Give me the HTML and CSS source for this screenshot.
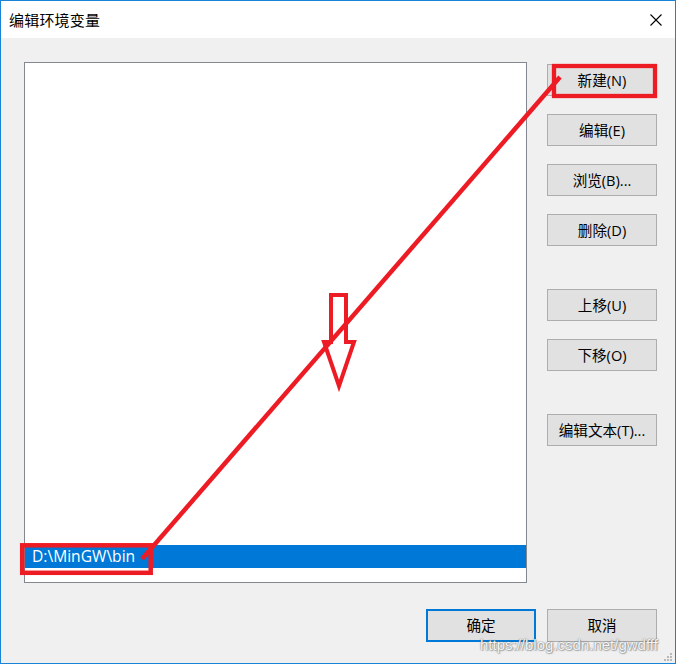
FILE: index.html
```html
<!DOCTYPE html>
<html lang="zh-CN">
<head>
<meta charset="utf-8">
<title>编辑环境变量</title>
<link rel="stylesheet" href="styles.css">
</head>
<body>
<div class="window">
  <div class="titlebar">
    <span class="title">编辑环境变量</span>
    <svg class="close" width="12" height="12" viewBox="0 0 12 12"><path d="M0.5 0.5 L11.5 11.5 M11.5 0.5 L0.5 11.5" stroke="#000" stroke-width="1.1" fill="none"/></svg>
  </div>
  <div class="content">
    <div class="main">
      <div class="listbox">
        <div class="item selected">D:\MinGW\bin</div>
      </div>
      <div class="side">
        <div class="group">
          <div class="btn">新建(N)</div>
          <div class="btn">编辑(E)</div>
          <div class="btn">浏览(B)...</div>
          <div class="btn">删除(D)</div>
        </div>
        <div class="group">
          <div class="btn">上移(U)</div>
          <div class="btn">下移(O)</div>
        </div>
        <div class="group">
          <div class="btn">编辑文本(T)...</div>
        </div>
      </div>
    </div>
    <div class="footer">
      <div class="btn wide default">确定</div>
      <div class="btn wide">取消</div>
    </div>
  </div>
  <svg class="annot" width="677" height="664" viewBox="0 0 677 664">
    <g fill="none" stroke="#ed1c24">
      <rect x="554" y="66" width="101" height="30" stroke-width="4.3"/>
      <rect x="22.2" y="545.3" width="128.5" height="27.5" stroke-width="4.5"/>
      <line x1="560" y1="77" x2="142" y2="559" stroke-width="4.5"/>
      <polygon points="331,295 346,295 346,342 354,342 339,386 324,342 331,342" stroke-width="4" stroke-linejoin="miter"/>
    </g>
  </svg>
  <div class="watermark">https://blog.csdn.net/gwdfff</div>
  <svg class="grip" width="10" height="10" viewBox="0 0 10 10">
    <g fill="#b9b9b9">
      <rect x="7" y="1" width="2" height="2"/>
      <rect x="4" y="4" width="2" height="2"/>
      <rect x="7" y="4" width="2" height="2"/>
      <rect x="1" y="7" width="2" height="2"/>
      <rect x="4" y="7" width="2" height="2"/>
      <rect x="7" y="7" width="2" height="2"/>
    </g>
  </svg>
</div>
</body>
</html>
```

FILE: styles.css
```css
html, body {
  margin: 0;
  padding: 0;
  background: #ffffff;
}

body {
  width: 677px;
  height: 664px;
  overflow: hidden;
  font-family: "Open Sans", "Noto Sans CJK SC", sans-serif;
  color: #000;
}

.window {
  position: relative;
  box-sizing: border-box;
  width: 676px;
  height: 664px;
  border: 1px solid #1883d7;
  background: #f0f0f0;
  display: flex;
  flex-direction: column;
}

.titlebar {
  height: 37px;
  background: #ffffff;
  display: flex;
  align-items: center;
  justify-content: space-between;
  padding-left: 8px;
  padding-right: 13px;
}

.title {
  font-family: "Noto Sans CJK SC", sans-serif;
  font-size: 15px;
  line-height: 37px;
  letter-spacing: 0.2px;
}

.close {
  display: block;
}

.content {
  padding: 24px 18px 0 23px;
  display: flex;
  flex-direction: column;
}

.main {
  display: flex;
  gap: 20px;
}

.listbox {
  box-sizing: border-box;
  width: 503px;
  height: 521px;
  border: 1px solid #828790;
  background: #ffffff;
  display: flex;
  flex-direction: column;
  justify-content: flex-end;
  padding-bottom: 14px;
}

.item {
  height: 23px;
  line-height: 23px;
  padding-left: 7px;
  font-size: 15.6px;
}

.item.selected {
  background: #0078d7;
  color: #ffffff;
}

.side {
  width: 110px;
  padding-top: 2px;
  display: flex;
  flex-direction: column;
  gap: 43px;
}

.group {
  display: flex;
  flex-direction: column;
  gap: 18px;
}

.btn {
  box-sizing: border-box;
  width: 110px;
  height: 32px;
  border: 1px solid #adadad;
  background: #e1e1e1;
  display: flex;
  align-items: center;
  justify-content: center;
  font-size: 14.6px;
  padding-bottom: 2px;
}

.footer {
  margin-top: 26px;
  display: flex;
  justify-content: flex-end;
  gap: 11px;
}

.btn.wide {
  height: 33px;
}

.btn.default {
  border: 2px solid #0078d7;
}

.annot {
  position: absolute;
  left: -1px;
  top: -1px;
  pointer-events: none;
}

.watermark {
  position: absolute;
  left: 479px;
  top: 634px;
  font-family: "Liberation Sans", sans-serif;
  font-size: 15px;
  line-height: 20px;
  color: rgba(255, 255, 255, 0.95);
  text-shadow: 0 0 1px rgba(90, 90, 90, 0.8), 0 0 2px rgba(120, 120, 120, 0.6), 1px 1px 1px rgba(130, 130, 130, 0.5);
}

.grip {
  position: absolute;
  right: 2px;
  bottom: 1px;
}
```
